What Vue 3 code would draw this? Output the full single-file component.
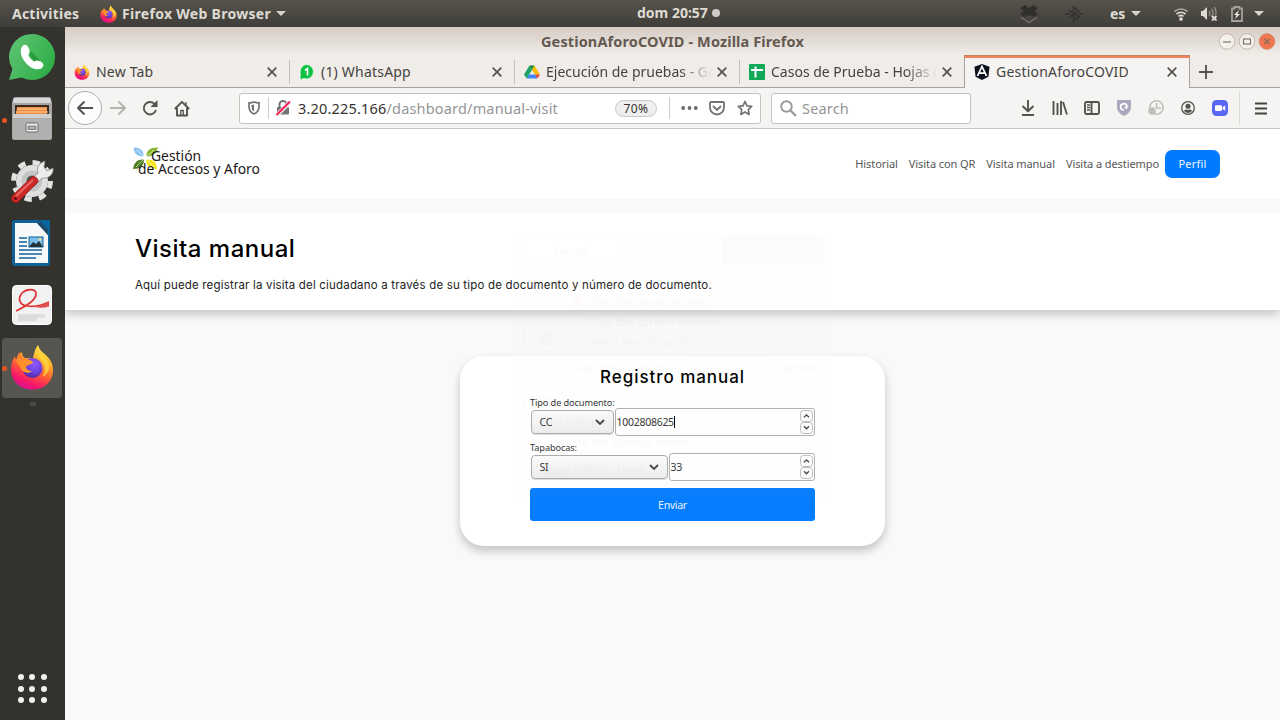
<script setup>
const tabs = [
  { title: 'New Tab', icon: 'firefox' },
  { title: '(1) WhatsApp', icon: 'whatsapp' },
  { title: 'Ejecución de pruebas - Google Drive', icon: 'drive' },
  { title: 'Casos de Prueba - Hojas de cálculo', icon: 'sheets' },
  { title: 'GestionAforoCOVID', icon: 'angular', active: true },
]
const links = ['Historial', 'Visita con QR', 'Visita manual', 'Visita a destiempo']
</script>

<template>
  <div class="desktop">
    <svg class="defs" width="0" height="0" aria-hidden="true">
      <defs>
        <linearGradient id="ffBody" x1=".8" y1="0" x2=".35" y2="1">
          <stop offset="0" stop-color="#fff44f" /><stop offset=".32" stop-color="#ffb52a" />
          <stop offset=".6" stop-color="#ff5a36" /><stop offset=".85" stop-color="#f5156c" /><stop offset="1" stop-color="#d9128e" />
        </linearGradient>
        <radialGradient id="ffCore" cx=".6" cy=".3" r=".75">
          <stop offset="0" stop-color="#9059ff" /><stop offset=".6" stop-color="#6a3fd9" /><stop offset="1" stop-color="#4a2b9e" />
        </radialGradient>
        <linearGradient id="ffFox" x1="0" y1="0" x2="1" y2="1">
          <stop offset="0" stop-color="#ff7a2a" /><stop offset="1" stop-color="#ffa52e" />
        </linearGradient>
        <symbol id="firefox" viewBox="0 0 44 46">
          <path fill="url(#ffBody)" d="M28 1c1 4 3 6 6 8.500 5 4 9 9 9 16.500C43 38 34 45.500 22 45.500S1 37 1 25c0-6 2-10 4-13 0 2 .5 3 1 4 2-4 4-6 6-8 0 3 1 5 3 6l8 0c1-5 2-9 5-13z" />
          <circle cx="22.500" cy="24" r="10" fill="url(#ffCore)" />
          <path fill="url(#ffFox)" d="M10 8c1 4 2 6 6 7 3 1 6 1 7 3.500-2 2.500-6 2-7 4.500 0 2.500 3 4 6 4-3 3-9 2-11-2C9 20 5 20 5 12c0 2 .5 3 1.500 4C7 12 8 10 10 8z" />
          <path fill="#ffd53d" opacity=".8" d="M28 1c-3 6-1 11 3 15 5 5 5 12 1 17 8-3 9-13 4-19-3-4-7-7-8-13z" />
        </symbol>
      </defs>
    </svg>

    <header class="topbar">
      <span class="activities">Activities</span>
      <svg class="tb-fox" width="17" height="18"><use href="#firefox" /></svg>
      <span class="appname">Firefox Web Browser</span>
      <svg class="caret" width="10" height="5"><path d="M0 0h10L5 5z" fill="#d6d3cd" /></svg>
      <span class="clock"><span class="clocktext">dom 20:57</span><i></i></span>
      <span class="tray">
        <svg width="20" height="20" viewBox="0 0 20 20" fill="#302f2c"><path d="M5.500 1 1 4l3.500 3L1 10l4.500 3L10 10l4.500 3 4.500-3-3.500-3L19 4l-4.500-3L10 4z" /><path d="M5 6h10v3l-5 3-5-3z" /><path d="M2 13.500l8 5 8-5" fill="none" stroke="#77756e" stroke-width="1.200" /></svg>
        <svg class="bt" width="18" height="18" viewBox="0 0 18 18" fill="none" stroke="#33322f" stroke-width="1.500"><path d="M4 5.500l10 6.500-5.500 4V2L14 6 4 12.500M0 9h5M13 9h5" /></svg>
        <span class="lang">es</span>
        <svg class="caret2" width="10" height="5"><path d="M0 0h10L5 5z" fill="#d6d3cd" /></svg>
        <svg class="wifi" width="14" height="14" viewBox="0 0 14 14" fill="none" stroke="#dedbd5" stroke-width="1.700"><path d="M.5 4.500q6.500-5 13 0" opacity=".65" /><path d="M2.500 7q4.500-3.500 9 0" /><path d="M4.500 9.400q2.500-2 5 0" /><circle cx="7" cy="12" r="1" fill="#dedbd5" /></svg>
        <svg class="vol" width="18" height="16" viewBox="0 0 18 16"><path d="M1 5h2l4-4v13L3 10H1z" fill="#dedbd5" /><path d="M9 5q2 2.500 0 5M11.500 3q3 4 0 8M14 1q3 4 1.500 8" fill="none" stroke="#918f88" stroke-width="1.400" /><path d="M12 10l4.500 4.500M16.500 10L12 14.500" stroke="#dedbd5" stroke-width="1.800" /></svg>
        <svg class="bat" width="12" height="16" viewBox="0 0 12 16"><path d="M1 2.500h2.500V1h5v1.500H11V15H1z" fill="none" stroke="#a3a19b" stroke-width="1.800" /><path d="M8 4L3 9h2.500L4 13l5-5H6.500z" fill="#eceae5" /></svg>
        <svg class="caret3" width="10" height="5"><path d="M0 0h10L5 5z" fill="#d6d3cd" /></svg>
      </span>
    </header>

    <div class="below">
      <aside class="dock">
        <div class="app">
          <svg width="48" height="48" viewBox="0 0 48 48"><defs><linearGradient id="wa" x1="0" y1="0" x2="1" y2=".6"><stop offset="0" stop-color="#63c577" /><stop offset="1" stop-color="#2fae48" /></linearGradient></defs><path fill="url(#wa)" d="M24 1a23 23 0 1 1-10.500 43.400L1 47l3.500-11A23 23 0 0 1 24 1z" /><path fill="#289a3f" d="M23 18l9 10-5 1-5-6z" /><path fill="#fff" d="M14.500 13c1.500-1.700 4-1.700 5 0 1.200 2 2.500 4 2 6-.3 1.500-1.500 2-1 3.500 1 2.500 3 4.300 5 5.500 1.500.8 2-.8 4-.5 2 .4 4.500 1.500 5.500 3 1 2-.3 4.500-2.500 5.300-5 1.700-11-1.300-15-6.300-4.500-5.500-6.500-12-3-16.500z" /></svg>
        </div>
        <div class="app">
          <b class="run"></b>
          <svg width="42" height="44" viewBox="0 0 42 44"><path d="M2 2q0-2 3-2h32q3 0 3 2l1 4v35q0 2-2 2H3q-2 0-2-2V6z" fill="#a6a6a6" /><path d="M3 1h36l1 5H2z" fill="#d8d8dc" /><rect x="4" y="8" width="34" height="11" fill="#3a2a20" /><path d="M6 10h30v7H5z" fill="#f08a3c" /><path d="M6 12h30M5 15h32" stroke="#fbd4a4" stroke-width="1" /><path d="M2 17h38v25H2z" fill="#b0b0b0" /><path d="M2 17h38v4H2z" fill="#cfcfcf" /><rect x="15" y="26" width="12" height="9" rx="1.500" fill="#eee" stroke="#666" /><rect x="17" y="29" width="8" height="3.500" fill="#aaa" stroke="#666" stroke-width=".7" /></svg>
        </div>
        <div class="app">
          <svg width="44" height="44" viewBox="0 0 44 44"><circle cx="22" cy="22" r="16" fill="#dfdfdf" /><circle cx="22" cy="22" r="18.500" fill="none" stroke="#e2e2e2" stroke-width="5" stroke-dasharray="7.270 7.260" /><circle cx="22" cy="22" r="10.500" fill="#c4c4c4" /><circle cx="22" cy="22" r="5.500" fill="#55534f" /><path d="M28 14c-2-5 1-10 7-12l-1 6 3 4 6-3c1 6-4 11-11 10l-6 6-5-5z" fill="#ededed" stroke="#888" stroke-width=".8" /><path d="M22 18c3-2 8 3 5 6L8 43c-4 2-8-2-6-6z" fill="#cc2929" stroke="#8f1515" stroke-width=".8" /><path d="M23 21L6 37" stroke="#ee6a62" stroke-width="1.800" /><circle cx="5.500" cy="39.500" r="1.600" fill="#701010" /></svg>
        </div>
        <div class="app">
          <svg width="40" height="46" viewBox="0 0 40 46"><path d="M3 0h23l12 12v31q0 3-3 3H3q-3 0-3-3V3q0-3 3-3z" fill="#0f6199" /><path d="M27 0h11v12z" fill="#0b659f" /><path d="M3 3h22l11 12v28H3z" fill="#f6f8fa" /><path d="M25 3l11 12V11L28 3z" fill="#24475f" /><path d="M7 18h8M7 22h8M7 26h8M7 30h23M7 34h23M7 38h17" stroke="#12629a" stroke-width="1.700" /><rect x="17" y="17" width="14" height="10" fill="#79bde8" stroke="#12629a" /><path d="M17 27l4-5 3 2 3-3 4 6z" fill="#26333d" /><circle cx="28" cy="19.500" r="1.300" fill="#f8e678" /></svg>
        </div>
        <div class="app">
          <svg width="40" height="40" viewBox="0 0 40 40"><rect x=".5" y=".5" width="39" height="39" rx="4" fill="#f1f1f1" stroke="#fff" /><path d="M6 31h27M6 34.500h19" stroke="#dcdcdc" stroke-width="3.500" /><path d="M4 26C14 21 25 15 24 8c-1-5-10-4-14 0-5 6-2 12 5 13 8 1 14 0 22-4" fill="none" stroke="#dc3434" stroke-width="1.700" /><path d="M18 21.500c7 .3 13-1 19-5v5c-6 2-12 1-19 0z" fill="#e05050" /></svg>
        </div>
        <div class="app focused">
          <b class="run"></b>
          <svg width="44" height="46"><use href="#firefox" /></svg>
        </div>
        <i class="speck"></i>
        <div class="grid"><i v-for="d in 9" :key="d"></i></div>
      </aside>

      <main class="window">
        <div class="titlebar">
          <span class="wtitle">GestionAforoCOVID - Mozilla Firefox</span>
          <span class="wbtns">
            <svg v-for="k in 3" :key="k" width="16" height="18" viewBox="0 0 16 18" :class="'wb' + k">
              <circle cx="8" cy="8.500" r="7.800" />
              <path v-if="k === 1" d="M4 9h8" /><rect v-else-if="k === 2" x="4.500" y="6" width="7" height="5" /><path v-else d="M5.300 5.800l5.400 5.400M10.700 5.800l-5.400 5.400" />
            </svg>
          </span>
        </div>
        <div class="tabs">
          <div v-for="t in tabs" :key="t.title" class="tab" :class="{ active: t.active }">
            <svg v-if="t.icon === 'firefox'" width="16" height="16"><use href="#firefox" /></svg>
            <svg v-else-if="t.icon === 'whatsapp'" width="16" height="16" viewBox="0 0 16 16"><path d="M8 .5a7.200 7.200 0 1 1-3 14L1.200 15.500V8A7 7 0 0 1 8 .5z" fill="#0cc143" stroke="#fff" stroke-width=".6" /><path d="M6 6.200L8.500 4.500v7" fill="none" stroke="#fff" stroke-width="1.700" /></svg>
            <svg v-else-if="t.icon === 'drive'" width="16" height="16" viewBox="0 0 16 16"><path d="M5.500 1.500L0 10.500 2.700 14.500 8 6z" fill="#1ea362" /><path d="M5.500 1.500h5L8 6z" fill="#14833c" /><path d="M10.500 1.500L16 10.500h-5L8 6z" fill="#fbbc04" /><path d="M5 10.500h6L13.300 14.500H2.700z" fill="#4285f4" /><path d="M11 10.500h5l-2.700 4z" fill="#ea4335" /></svg>
            <svg v-else-if="t.icon === 'sheets'" width="16" height="16" viewBox="0 0 16 16"><rect width="16" height="16" rx="1" fill="#0fa958" /><path d="M2 6h12M6.500 2.500v11" stroke="#fff" stroke-width="2" /></svg>
            <svg v-else width="16" height="16" viewBox="0 0 16 16"><path d="M8 0l7.600 2.700-1.200 10L8 16l-6.400-3.300L.4 2.700z" fill="#0d1420" /><path d="M3.500 12L8 2.500 12.500 12M5.500 9.200h5" fill="none" stroke="#fff" stroke-width="1.700" /></svg>
            <span class="ttl" :class="'t-' + t.icon">{{ t.title }}</span>
            <svg class="x" width="10" height="10" viewBox="0 0 10 10"><path d="M.7.7l8.600 8.600M9.300.7L.7 9.300" stroke="#55534f" stroke-width="1.700" /></svg>
          </div>
          <svg class="plus" width="14" height="14"><path d="M7 0v14M0 7h14" stroke="#55534f" stroke-width="1.900" /></svg>
        </div>
        <div class="toolbar">
          <span class="back"><svg width="18" height="16" viewBox="0 0 18 16"><path d="M17 8H2M8.500 1.500L2 8l6.500 6.500" class="ln" /></svg></span>
          <span class="ic"><svg width="18" height="16" viewBox="0 0 18 16"><path d="M1 8h15M9.500 1.500L16 8l-6.500 6.500" class="ln pale" /></svg></span>
          <span class="ic"><svg width="16" height="16" viewBox="0 0 16 16"><path d="M13 4.500A6.200 6.200 0 1 0 14 10" class="ln" /><path d="M15.500 0v7H8.500z" fill="#55534f" /></svg></span>
          <span class="ic"><svg width="16" height="17" viewBox="0 0 16 17"><path d="M.8 9L8 1.800 15.200 9M3 8v7.500h10V8" class="ln" /><path d="M12 2v4M6.800 15v-4.500h2.500V15" class="ln thin" /></svg></span>
          <div class="url">
            <svg class="u1" width="12" height="14" viewBox="0 0 12 14"><path d="M6 1q3 1 5 .8v4.500Q10.500 11 6 13 1.500 11 1 6.300V1.800Q3.500 2 6 1z" fill="none" stroke="#737373" stroke-width="1.700" /><path d="M6 3.500v7Q3.500 9 3.500 6V4z" fill="#737373" /></svg>
            <i class="vs"></i>
            <svg class="u2" width="16" height="16" viewBox="0 0 16 16"><path d="M4.500 8V4.500a3.500 3.500 0 0 1 7 0V8" fill="none" stroke="#737373" stroke-width="2" /><rect x="2" y="7" width="12" height="7.500" rx="1" fill="#737373" /><path d="M15 2L2 15" stroke="#f3f3f3" stroke-width="4" /><path d="M15 1.500L1.500 15" stroke="#f5184e" stroke-width="2" /></svg>
            <span class="addr">3.20.225.166<em>/dashboard/manual-visit</em></span>
            <span class="zoom">70%</span>
            <i class="vs vs2"></i>
            <svg class="u3" width="17" height="4"><circle cx="2.200" cy="2" r="1.900" /><circle cx="8.500" cy="2" r="1.900" /><circle cx="14.800" cy="2" r="1.900" /></svg>
            <svg class="u4" width="16" height="15" viewBox="0 0 16 15"><path d="M2 1h12q1 0 1 1v4.500a7 7 0 0 1-14 0V2q0-1 1-1z" fill="none" stroke="#737373" stroke-width="1.800" /><path d="M4.500 5.500L8 9l3.500-3.500" fill="none" stroke="#737373" stroke-width="1.900" stroke-linecap="round" /></svg>
            <svg class="u5" width="16" height="16" viewBox="0 0 16 16"><path d="M8 1.500l2 4.300 4.700.6-3.400 3.300.8 4.700L8 12.100l-4.100 2.300.8-4.700L1.300 6.400 6 5.800z" fill="none" stroke="#737373" stroke-width="1.700" stroke-linejoin="round" /></svg>
          </div>
          <div class="search">
            <svg width="17" height="17" viewBox="0 0 17 17"><circle cx="6.500" cy="6.500" r="5.300" fill="none" stroke="#999" stroke-width="1.900" /><path d="M10.500 10.500L16 16" stroke="#999" stroke-width="2.200" /></svg>
            <span class="ph">Search</span>
          </div>
          <div class="tools">
            <span><svg width="14" height="16" viewBox="0 0 14 16"><path d="M7 0v11M1.500 6L7 11.300 12.500 6M1 15h12" class="ln" /></svg></span>
            <span><svg width="16" height="14" viewBox="0 0 16 14"><path d="M1.500 0v14M5.500 2v12M9 0v14M11 1l4 12.500" class="ln" /></svg></span>
            <span><svg width="16" height="14" viewBox="0 0 16 14"><rect x="1" y="1" width="14" height="12" rx="1.500" class="ln" /><path d="M7.500 1v12" class="ln" /><path d="M3 4h3M3 6.500h3M3 9h3" class="ln thin" /></svg></span>
            <span><svg width="14" height="16" viewBox="0 0 14 16"><path d="M0 0h14v7q0 6-7 9Q0 13 0 7z" fill="#a9a8bd" /><path d="M10 6.500A3.200 3.200 0 1 0 7 10" fill="none" stroke="#fff" stroke-width="1.700" /><path d="M7 6.500h4.500L9.300 9.500z" fill="#fff" /></svg></span>
            <span><svg width="16" height="16" viewBox="0 0 16 16" fill="none" stroke="#bfbebb" stroke-width="1.500"><circle cx="8.500" cy="7.500" r="6.700" /><path d="M8.500 3v5H13" /><circle cx="4" cy="11" r="3" fill="#bfbebb" /></svg></span>
            <span><svg width="14" height="14" viewBox="0 0 16 16"><circle cx="8" cy="8" r="7.200" fill="none" stroke="#55534f" stroke-width="1.500" /><circle cx="8" cy="6" r="2.900" fill="#55534f" /><path d="M3.300 11.500q1-2 2.700-1.700 2 1 4 0 1.700-.3 2.700 1.700Q8 16 3.300 11.500z" fill="#55534f" /></svg></span>
            <span><svg width="16" height="16" viewBox="0 0 16 16"><rect width="16" height="16" rx="4.500" fill="#5a67f5" /><rect x="3" y="5.200" width="7" height="5.800" rx="1.200" fill="#fff" /><path d="M10.500 7.300L13.200 5.500v5.200L10.500 9z" fill="#fff" /></svg></span>
          </div>
          <i class="msep"></i>
          <svg class="menu" width="12" height="13"><path d="M0 1.500h12M0 6.500h12M0 11.500h12" stroke="#454340" stroke-width="1.900" /></svg>
        </div>

        <div class="page">
          <nav class="nav">
            <div class="logo">
              <svg width="25" height="23" viewBox="0 0 25 23"><path d="M.5.500C7 .5 11 3 10.500 9.500 4 10 1 6 .5.500z" fill="#8ec5f2" /><path d="M25 .5C18 0 13 3 13.500 9.500 20 10 23 6 25 .500z" fill="#86b82f" /><path d="M0 22C1 15 5 12 11 12.500 11 19 7 22 0 22z" fill="#4e7d22" /><path d="M24 22c0-7-4-10-11-9.500 0 6 4 9.500 11 9.500z" fill="#f5e51b" /><path d="M12 11L4 3M12 11l9-8M12 11L3 20M12 11l9 9" stroke="#fff" stroke-width=".6" /></svg>
              <div class="brand"><span class="b1">Gestión</span><span>de Accesos y Aforo</span></div>
            </div>
            <div class="links">
              <a v-for="l in links" :key="l">{{ l }}</a>
              <span class="perfil">Perfil</span>
            </div>
          </nav>
          <section class="intro">
            <h1>Visita manual</h1>
            <p>Aquí puede registrar la visita del ciudadano a través de su tipo de documento y número de documento.</p>
          </section>
          <section class="card">
            <h2>Registro manual</h2>
            <label>Tipo de documento:</label>
            <div class="row">
              <div class="sel s1"><span>CC</span><svg width="10" height="7"><path d="M1 1l4 4 4-4" class="ch" /></svg></div>
              <div class="num"><span>1002808625</span><i class="cur"></i>
                <span class="spin"><svg v-for="k in 2" :key="k" width="13" height="12" viewBox="0 0 13 12"><rect x=".5" y=".5" width="12" height="11" rx="3" fill="#fdfdfd" stroke="#bbb" /><path :d="k === 1 ? 'M4 7.300L6.500 4.800 9 7.300' : 'M4 4.300l2.500 2.500L9 4.300'" fill="none" stroke="#444" stroke-width="1.300" /></svg></span>
              </div>
            </div>
            <label>Tapabocas:</label>
            <div class="row">
              <div class="sel s2"><span>SI</span><svg width="10" height="7"><path d="M1 1l4 4 4-4" class="ch" /></svg></div>
              <div class="num"><span>33</span>
                <span class="spin"><svg v-for="k in 2" :key="k" width="13" height="12" viewBox="0 0 13 12"><rect x=".5" y=".5" width="12" height="11" rx="3" fill="#fdfdfd" stroke="#bbb" /><path :d="k === 1 ? 'M4 7.300L6.500 4.800 9 7.300' : 'M4 4.300l2.500 2.500L9 4.300'" fill="none" stroke="#444" stroke-width="1.300" /></svg></span>
              </div>
            </div>
            <div class="send">Enviar</div>
          </section>
        </div>
      </main>
    </div>

    <svg class="fading" width="350" height="290" viewBox="0 0 350 290">
      <rect x="8" y="8" width="330" height="275" rx="8" fill="#000" opacity=".12" />
      <rect x="16" y="12" width="316" height="266" fill="#f6f5f4" />
      <rect x="22" y="17" width="100" height="27" rx="3" fill="#fff" stroke="#aaa" />
      <text x="55" y="35">Cancel</text>
      <rect x="224" y="17" width="101" height="27" rx="3" fill="#198049" />
      <text x="230" y="35" class="w">Take Screenshot</text>
      <rect x="75" y="77" width="9" height="9" rx="3" fill="#e95420" />
      <text x="90" y="86">Grab the whole screen</text>
      <text x="90" y="106">Grab the current window</text>
      <text x="90" y="126">Select area to grab</text>
      <rect x="26" y="106" width="33" height="25" rx="3" fill="none" stroke="#333" /><circle cx="48" cy="119" r="7" fill="#777" />
      <text x="72" y="152">Grab after a delay of</text>
      <text x="195" y="152">0</text><text x="234" y="152">−</text><text x="258" y="152">+</text>
      <rect x="189" y="136" width="84" height="22" rx="3" fill="none" stroke="#999" />
      <text x="280" y="152">seconds</text>
      <text x="24" y="185">Effects</text>
      <text x="51" y="205">Include pointer</text>
      <text x="51" y="226">Include the window border</text>
      <text x="42" y="253">Apply effect:</text><text x="119" y="253">None</text>
    </svg>
  </div>
</template>

<style>
html, body { margin: 0; overflow: hidden; }
</style>
<style scoped>
.desktop { width: 1280px; height: 720px; display: flex; flex-direction: column; position: relative; overflow: hidden; font-family: "Noto Sans", sans-serif; background: #f9f9fc; }
.desktop * { box-sizing: border-box; }
svg { flex: none; display: block; overflow: visible; }
.defs { position: absolute; }
span, a, p, h1, h2, label { white-space: nowrap; }

.topbar { height: 27px; flex: none; background: linear-gradient(#57534c, #3e3d39); color: #dfdbd2; font-weight: 700; font-size: 14px; line-height: 27px; display: flex; align-items: center; padding-left: 12px; position: relative; }
.activities { width: 88px; letter-spacing: .22px; }
.appname { margin-left: 5px; width: 149px; letter-spacing: .3px; }
.caret { margin-left: 5px; }
.clock { position: absolute; left: 637px; top: -1px; display: flex; align-items: center; }
.clock .clocktext { width: 71px; }
.clock i { width: 8px; height: 8px; border-radius: 50%; background: #d0cdc8; margin-left: 4px; }
.tray { position: absolute; left: 1019px; top: 0; height: 27px; display: flex; align-items: center; }
.bt { margin-left: 26px; }
.lang { margin-left: 27px; width: 16px; }
.caret2 { margin-left: 5px; }
.wifi { margin-left: 33px; }
.vol { margin-left: 12px; }
.bat { margin-left: 13px; }
.caret3 { margin-left: 11px; }

.below { flex: 1; display: flex; min-height: 0; }
.dock { width: 65px; flex: none; background: linear-gradient(90deg, #33312d, #35332e); display: flex; flex-direction: column; align-items: center; }
.app { width: 60px; height: 60px; flex: none; margin-bottom: 2px; display: flex; align-items: center; justify-content: center; position: relative; border-radius: 4px; margin-right: 1px; }
.app:nth-child(5) { margin-bottom: 3px; }
.focused { background: #575550; margin-bottom: 4px; }
.focused svg { margin-top: -2px; }
.run { position: absolute; left: 0; top: 29px; width: 5px; height: 5px; border-radius: 50%; background: #e95420; }
.focused .run { top: 28px; }
.speck { width: 6px; height: 4px; background: #4b4a47; }
.grid { display: grid; grid-template-columns: repeat(3, 6px); gap: 5.500px; margin: auto 1px 17px 0; }
.grid i { width: 6px; height: 6px; border-radius: 50%; background: #f2f1f0; }

.window { flex: 1; display: flex; flex-direction: column; min-width: 0; background: linear-gradient(#d5cbc3, #f0ede9 28px); }
.titlebar { height: 29px; flex: none; display: flex; justify-content: center; position: relative; color: #645950; font-weight: 700; font-size: 14.500px; letter-spacing: .12px; line-height: 28px; }
.wbtns { position: absolute; right: 5px; top: 6px; display: flex; gap: 4px; }
.wbtns circle { fill: #f3f0ec; stroke: #bdb1a6; stroke-width: .9; }
.wbtns path, .wbtns rect { fill: none; stroke: #776b61; stroke-width: 1.100; }
.wbtns .wb3 circle { fill: #ef7650; stroke: #d98565; }
.tabs { height: 32px; flex: none; display: flex; align-items: center; box-shadow: inset 0 -1px #a5a39f; }
.tab { width: 225px; height: 32px; display: flex; align-items: center; padding-left: 9px; color: #45433f; font-size: 14px; position: relative; }
.tab:not(.active)::after { content: ""; position: absolute; right: 0; top: 4px; width: 1px; height: 24px; background: #c4c0bb; }
.tab:nth-child(4)::after { display: none; }
.tab.active { background: #f5f4f2; border: 1px solid #a5a39f; border-bottom: 0; border-top: 0; margin: 0 0 0 -1px; width: 226px; }
.tab.active::before { content: ""; position: absolute; left: -1px; right: -1px; top: -1px; height: 3px; background: linear-gradient(#c1836a 1px, #f0835b 1px); }
.ttl { margin-left: 6px; width: 166px; line-height: 24px; overflow: hidden; letter-spacing: .2px; }
.t-drive, .t-sheets { letter-spacing: 0; -webkit-mask-image: linear-gradient(90deg, #000 134px, transparent 166px); mask-image: linear-gradient(90deg, #000 134px, transparent 166px); }
.x { margin-left: 5px; }
.plus { margin-left: 9px; }

.toolbar { height: 41px; flex: none; background: #f5f4f2; border-bottom: 1px solid #c8c5c2; display: flex; align-items: center; padding-left: 3px; }
.ln { fill: none; stroke: #55534f; stroke-width: 1.900; stroke-linejoin: round; }
.thin { stroke-width: 1.300; }
.pale { stroke: #b5b3b0; }
.back { width: 34px; height: 34px; border: 1px solid #b0aeaa; border-radius: 50%; background: #fcfcfc; display: flex; align-items: center; justify-content: center; }
.ic { width: 32px; display: flex; justify-content: center; }
.url, .search { height: 31px; background: #fff; border: 1px solid #c5c3c0; border-radius: 3px; display: flex; align-items: center; }
.url { width: 522px; margin-left: 41px; }
.u1 { margin-left: 8px; }
.vs { width: 1px; height: 22px; background: #ccc; margin-left: 8px; }
.u2 { margin-left: 6px; }
.addr { margin-left: 7px; width: 317px; font-size: 14.500px; letter-spacing: .18px; color: #35332f; }
.addr em { font-style: normal; color: #959595; }
.zoom { width: 42px; height: 17px; border: 1px solid #c8c8c8; border-radius: 9px; background: #efefef; font-size: 12px; letter-spacing: .4px; line-height: 15px; color: #35332f; display: flex; justify-content: center; }
.vs2 { margin-left: 12px; }
.u3 { margin-left: 11px; fill: #6b6b6b; }
.u4 { margin-left: 11px; }
.u5 { margin-left: 12px; }
.search { width: 200px; margin-left: 10px; padding-left: 8px; color: #959595; font-size: 14.500px; letter-spacing: .18px; }
.ph { margin-left: 5px; }
.tools { display: flex; margin-left: 41px; }
.tools > span { width: 32px; height: 18px; display: flex; align-items: center; justify-content: center; }
.msep { width: 1px; height: 34px; background: #dcdad7; margin-left: 3px; }
.menu { margin-left: 15px; }

.page { flex: 1; background: #f9f9fc; min-height: 0; }
.nav { height: 70px; background: #fff; display: flex; justify-content: space-between; padding: 18px 60px 0 68px; }
.logo { display: flex; height: 30px; }
.brand { display: flex; flex-direction: column; margin-left: -20px; color: #1a1a1a; font-size: 13.900px; line-height: 13px; padding-top: 2px; position: relative; }
.b1 { padding-left: 13px; }
.links { display: flex; gap: 11px; font-size: 11px; letter-spacing: -.08px; color: #555; line-height: 28px; margin-top: 3px; height: 28px; }
.perfil { margin-left: -5px; width: 55px; background: #007bff; border-radius: 7px; color: #f4f8ff; text-align: center; letter-spacing: .2px; }
.intro { margin-top: 14px; height: 97px; background: #fff; box-shadow: 0 4px 10px rgba(0, 0, 0, .22); clip-path: inset(0 0 -20px 0); padding: 20px 0 0 70px; font-family: Inter, sans-serif; color: #000; }
h1 { margin: 0; font-size: 24px; line-height: 32px; font-weight: 500; letter-spacing: .5px; }
.intro p { margin: 12px 0 0; font-size: 11.500px; line-height: 16px; letter-spacing: .18px; color: #222; }
.card { width: 425px; height: 190px; margin: 46px 0 0 395px; background: #fff; border-radius: 24px; box-shadow: 0 5px 10px rgba(0, 0, 0, .22); padding: 11px 70px 0; color: #333; }
h2 { margin: 0 0 5px; font: 500 17px/21px Inter, sans-serif; letter-spacing: .95px; color: #000; text-align: center; }
label { display: block; font-size: 9.200px; letter-spacing: -.1px; line-height: 19px; height: 15px; }
.row { display: flex; align-items: center; gap: 1px; height: 28px; padding-left: 1px; margin-bottom: 2px; font-size: 10.500px; letter-spacing: -.27px; }
.sel { height: 24px; border: 1px solid #aaa; border-radius: 4px; background: linear-gradient(#fcfcfc, #ececec); box-shadow: 0 1px #ddd; display: flex; align-items: center; justify-content: space-between; padding: 0 8px 0 7.500px; }
.s1 { width: 83px; }
.s2 { width: 137px; }
.ch { fill: none; stroke: #444; stroke-width: 1.800; }
.num { flex: 1; height: 28px; border: 1px solid #b0b0b0; border-radius: 3px; background: #fff; display: flex; align-items: center; padding-left: .5px; }
.cur { width: 1px; height: 12px; background: #000; }
.spin { margin-left: auto; display: flex; flex-direction: column; margin-right: 1px; }
.send { margin-top: 7px; height: 33px; border-radius: 3px; background: #057dff; color: #e8f3ff; font-size: 10.500px; letter-spacing: -.3px; line-height: 34px; text-align: center; }

.fading { position: absolute; left: 498px; top: 220px; opacity: .02; font: 500 11px "Noto Sans", sans-serif; pointer-events: none; }
.fading .w { fill: #fff; }
</style>
